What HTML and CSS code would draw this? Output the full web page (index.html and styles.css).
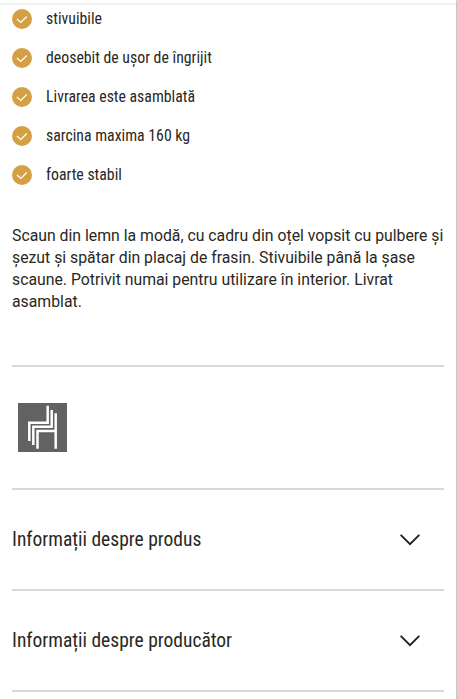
FILE: index.html
```html
<!DOCTYPE html>
<html lang="ro">
<head>
  <meta charset="UTF-8">
  <meta name="viewport" content="width=device-width, initial-scale=1.0">
  <title>Scaun din lemn</title>
  <link rel="stylesheet" href="styles.css">
</head>
<body>
  <main class="product">
    <ul class="benefits">
      <li><svg class="check" viewBox="0 0 20 20"><circle cx="10" cy="10" r="10"/><path d="M4.9 10l3.9 3.4 6-5.9"/></svg><span>stivuibile</span></li>
      <li><svg class="check" viewBox="0 0 20 20"><circle cx="10" cy="10" r="10"/><path d="M4.9 10l3.9 3.4 6-5.9"/></svg><span>deosebit de ușor de îngrijit</span></li>
      <li><svg class="check" viewBox="0 0 20 20"><circle cx="10" cy="10" r="10"/><path d="M4.9 10l3.9 3.4 6-5.9"/></svg><span>Livrarea este asamblată</span></li>
      <li><svg class="check" viewBox="0 0 20 20"><circle cx="10" cy="10" r="10"/><path d="M4.9 10l3.9 3.4 6-5.9"/></svg><span>sarcina maxima 160 kg</span></li>
      <li><svg class="check" viewBox="0 0 20 20"><circle cx="10" cy="10" r="10"/><path d="M4.9 10l3.9 3.4 6-5.9"/></svg><span>foarte stabil</span></li>
    </ul>

    <p class="description">Scaun din lemn la modă, cu cadru din oțel vopsit cu pulbere și<br>șezut și spătar din placaj de frasin. Stivuibile până la șase<br>scaune. Potrivit numai pentru utilizare în interior. Livrat<br>asamblat.</p>

    <div class="features">
      <svg class="stackable" viewBox="0 0 49 49">
        <rect width="49" height="49"/>
        <path d="M29.7 2.7v17H11.3V38M33.7 7v16.7H15.3V42M37.7 10.3v35.4M37.7 28H19.5v17.7"/>
      </svg>
    </div>

    <button class="accordion"><span>Informații despre produs</span><svg class="chevron" viewBox="0 0 20 12"><path d="M1.2 1.3l8.8 8.8 8.8-8.8"/></svg></button>
    <button class="accordion"><span>Informații despre producător</span><svg class="chevron" viewBox="0 0 20 12"><path d="M1.2 1.3l8.8 8.8 8.8-8.8"/></svg></button>
  </main>
</body>
</html>
```

FILE: styles.css
```css
* {
  box-sizing: border-box;
}

body {
  margin: 0;
  background-color: #fff;
  color: #292823;
  font-family: Roboto, "Noto Sans", sans-serif;
}

.product {
  height: 699px;
  padding: 0 12px;
  border-top: 1px solid #fff;
  border-right: 1px solid #c6c6c6;
  overflow: hidden;
  background: linear-gradient(#f1f1f1, #f1f1f1) 0 2px / 100% 2px no-repeat;
}

/* Benefits */
.benefits {
  list-style: none;
  margin: 0;
  padding: 8px 0 0;
  display: flex;
  flex-direction: column;
  gap: 19px;
}

.benefits li {
  display: flex;
  align-items: center;
  gap: 14px;
  height: 20px;
  font-family: "Roboto Condensed", Roboto, sans-serif;
  font-size: 15.8px;
  line-height: 20px;
}

.check {
  width: 20px;
  height: 20px;
}

.check circle {
  fill: #d5a044;
}

.check path {
  fill: none;
  stroke: #fff;
  stroke-width: 1.2;
}

.description {
  margin: 40px 0 52px;
  font-size: 15.8px;
  line-height: 22px;
  white-space: nowrap;
}

.features {
  height: 125px;
  padding: 36px 6px 0;
  border-top: 2px solid #d9d9d9;
  border-bottom: 2px solid #d9d9d9;
}

.stackable {
  display: block;
  width: 49px;
  height: 49px;
}

.stackable rect {
  fill: #636162;
}

.stackable path {
  fill: none;
  stroke: #fff;
  stroke-width: 2.5;
}

/* Accordion rows */
.accordion {
  display: flex;
  align-items: center;
  justify-content: space-between;
  width: 100%;
  height: 101px;
  padding: 0 24px 0 0;
  border: none;
  border-bottom: 2px solid #d9d9d9;
  background: none;
  color: inherit;
  font-family: "Roboto Condensed", Roboto, sans-serif;
  font-size: 19.5px;
  cursor: pointer;
}

.chevron {
  width: 20px;
  height: 12px;
}

.chevron path {
  fill: none;
  stroke: #22211c;
  stroke-width: 1.9;
  stroke-linecap: round;
}
```
